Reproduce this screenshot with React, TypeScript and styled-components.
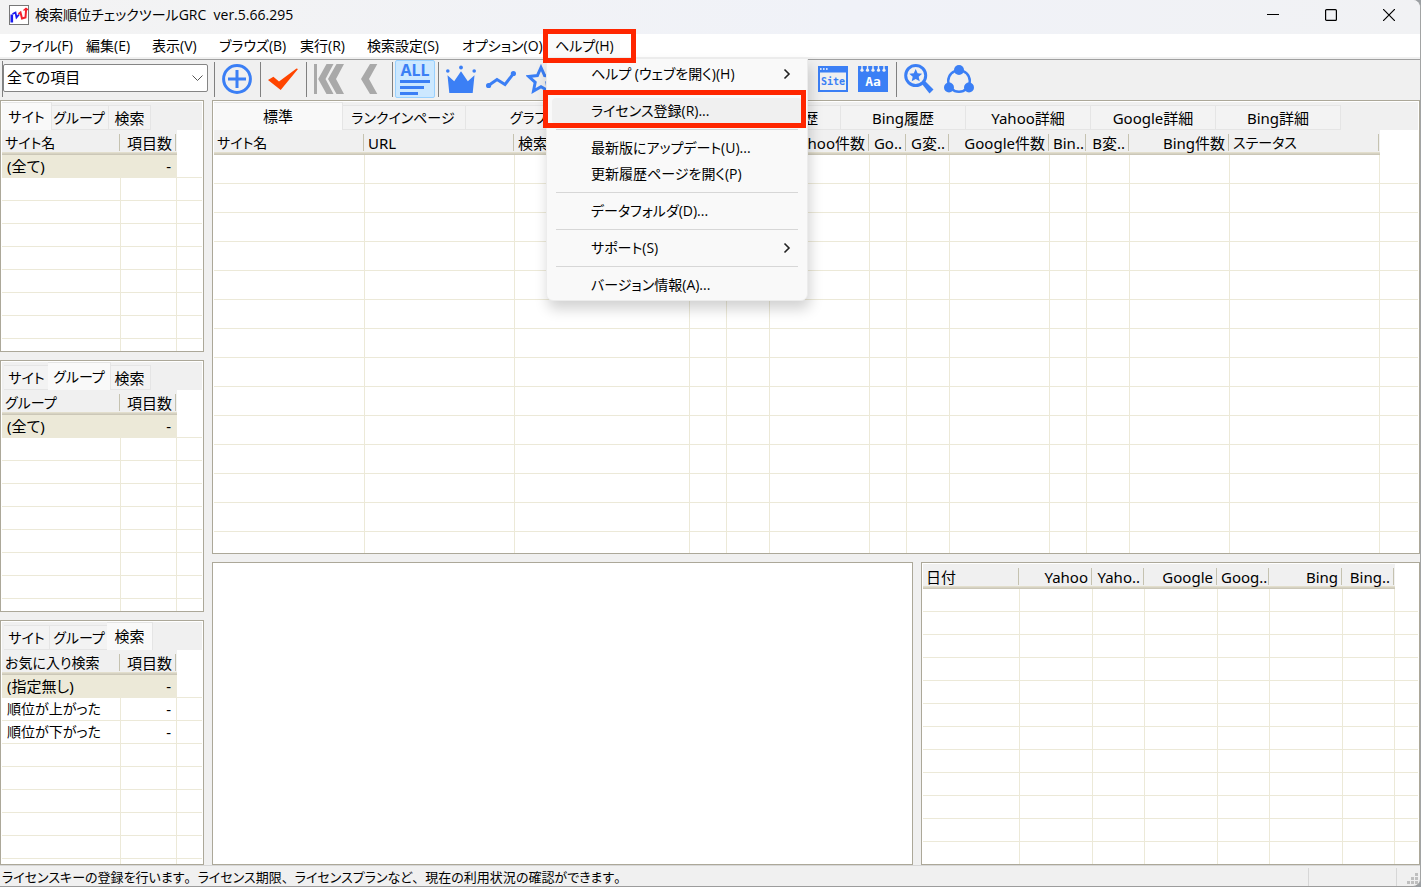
import React from "react";
import styled, { createGlobalStyle, css } from "styled-components";

const BLUE = "#3b7ff5";
const GREY = "#a9a9a9";
const PANEL_EDGE = "#aca899";
const GRID = "#ece9d8";

const GlobalStyle = createGlobalStyle`
  *, *::before, *::after { box-sizing: border-box; }
  body {
    margin: 0;
    background: #9b9fa3;
    color: #000;
    font-family: "Noto Sans", "Noto Sans CJK JP", sans-serif;
    font-size: 15px;
    font-feature-settings: "palt";
  }
  button, select {
    font: inherit;
    font-feature-settings: inherit;
    color: inherit;
  }
`;

const Window = styled.div`
  display: flex;
  flex-direction: column;
  height: 100vh;
  min-height: 600px;
  background: #f0f0f0;
  border-right: 1px solid #a2a4a4;
  border-bottom: 1px solid #9c9c9c;
  border-radius: 0 8px 8px 0;
  overflow: hidden;
`;

const TitleBar = styled.header`
  display: flex;
  align-items: flex-start;
  flex: none;
  height: 34px;
  padding: 0 2px 0 8px;
  background: linear-gradient(90deg, #f3f3f3, #f0f2f8 60%, #f1f2f4);

  > svg {
    margin-top: 5px;
  }
`;

const Title = styled.h1`
  flex: 1;
  margin: 5px 0 0 6px;
  font-family: "Open Sans", "Noto Sans CJK JP", sans-serif;
  font-size: 14px;
  font-weight: 400;
  line-height: 20px;
  white-space: pre;
`;

const CaptionButton = styled.button`
  display: grid;
  place-items: center;
  width: 58px;
  height: 34px;
  padding: 0 0 4px;
  border: 0;
  background: none;
`;

const MenuBar = styled.nav`
  display: flex;
  flex: none;
  height: 26px;
  background: #fff;
  border-bottom: 1px solid #a0a0a0;
  box-shadow: inset 0 -2px #f0f0f0;
`;

const MenuItem = styled.div<{ $width: number }>`
  position: relative;
  width: ${(p) => p.$width}px;
`;

const MenuButton = styled.button<{ $open?: boolean }>`
  width: 100%;
  height: 23px;
  padding: 0 0 0 9px;
  border: 0;
  background: ${(p) => (p.$open ? "#fafafa" : "none")};
  font-family: "Open Sans", "Noto Sans CJK JP", sans-serif;
  font-size: 14px;
  line-height: 23px;
  text-align: left;
  white-space: nowrap;
`;

const Highlight = styled.span<{ $inset: string }>`
  position: absolute;
  z-index: 6;
  inset: ${(p) => p.$inset};
  border: 5px solid #ff2600;
  pointer-events: none;
`;

const Dropdown = styled.div`
  position: absolute;
  z-index: 5;
  top: 24px;
  left: 0;
  width: 262px;
  padding: 2px 0;
  border: 1px solid #ececec;
  border-radius: 0 0 7px 7px;
  background: #f9f9f9;
  box-shadow: 2px 8px 14px rgba(0, 0, 0, 0.18);
`;

const DropdownItem = styled.button<{ $active?: boolean }>`
  position: relative;
  display: flex;
  align-items: center;
  justify-content: space-between;
  width: 250px;
  height: 26px;
  margin: 0 5px;
  padding: 0 11px 0 39px;
  border: 0;
  border-radius: 4px;
  background: ${(p) => (p.$active ? "#f0f0f0" : "none")};
  font-family: "Open Sans", "Noto Sans CJK JP", sans-serif;
  font-size: 14px;
  line-height: 26px;
  white-space: nowrap;
`;

const DropdownRule = styled.hr`
  height: 1px;
  margin: 5px 9px;
  border: 0;
  background: #d7d7d7;
`;

const Toolbar = styled.div`
  display: flex;
  align-items: center;
  flex: none;
  height: 40px;
  padding: 0 0 2px 2px;
`;

const Combo = styled.div`
  position: relative;
  flex: none;
  width: 206px;
  height: 36px;
  margin-right: 6px;
  padding-top: 3px;
  border-left: 1px solid #808080;

  svg {
    position: absolute;
    right: 5px;
    top: 13px;
    pointer-events: none;
  }
`;

const Select = styled.select`
  width: 205px;
  height: 28px;
  padding: 0 3px 3px;
  border: 1px solid #858585;
  border-radius: 2px;
  background: #fff;
  appearance: none;
`;

const Separator = styled.span<{ $first?: boolean }>`
  flex: none;
  width: 1px;
  height: 35px;
  margin: 0 2px 0 ${(p) => (p.$first ? 0 : 3)}px;
  background: #808080;
`;

const ToolButton = styled.button<{ $checked?: boolean }>`
  display: grid;
  place-items: center;
  flex: none;
  width: 40px;
  height: 38px;
  padding: 0;
  border: 1px solid ${(p) => (p.$checked ? "#99d1ff" : "transparent")};
  border-radius: 2px;
  background: ${(p) => (p.$checked ? "#cce8ff" : "none")};
`;

const Workspace = styled.main`
  display: grid;
  grid-template-columns: 204px minmax(0, 1fr);
  gap: 8px;
  flex: 1;
  min-height: 0;
`;

const Column = styled.div`
  display: flex;
  flex-direction: column;
  gap: 8px;
  min-width: 0;
  min-height: 0;
`;

const BottomRow = styled.div`
  display: grid;
  grid-template-columns: minmax(0, 701fr) minmax(0, 499fr);
  gap: 8px;
  flex: 303 1 0;
  min-height: 0;
`;

const Panel = styled.section<{ $grow?: number }>`
  display: flex;
  flex-direction: column;
  flex: ${(p) => p.$grow ?? 1} 1 0;
  min-width: 0;
  min-height: 0;
  padding: 1px;
  border: 1px solid ${PANEL_EDGE};
  background: #fff;
  overflow: hidden;
`;

const TabStrip = styled.div`
  display: flex;
  align-items: flex-end;
  flex: none;
  height: 28px;
  padding-left: 2px;
  background: #f0f0f0;
`;

const Tab = styled.button<{ $width: number; $active?: boolean; $small?: boolean }>`
  flex: none;
  width: ${(p) => p.$width}px;
  height: 25px;
  padding: 0;
  border: 1px solid #e5e5e5;
  border-left-width: 0;
  background: #f3f3f3;
  font-size: ${(p) => (p.$small ? 14 : 15)}px;
  line-height: 24px;
  white-space: nowrap;

  ${(p) =>
    p.$active &&
    css`
      position: relative;
      width: ${p.$width + 4}px;
      height: 28px;
      margin: 0 -2px;
      border-bottom: 0;
      background: #f9f9f9;
      line-height: 27px;
    `}
`;

const GridTable = styled.table`
  width: 100%;
  table-layout: fixed;
  border-spacing: 0;
`;

const HeadCell = styled.th<{ $right?: boolean; $small?: boolean }>`
  height: 25px;
  padding: 4px 1px 3px 0;
  border-bottom: 1px solid #cbc7b8;
  background: #f0f0f0;
  box-shadow: inset 0 -1px #d6d2c2, inset 0 -2px #e2decd;
  font-size: ${(p) => (p.$small ? 14 : 15)}px;
  font-weight: 400;
  text-align: ${(p) => (p.$right ? "right" : "left")};

  span {
    display: block;
    height: 17px;
    padding: 0 3px;
    border-right: 1px solid #c5c2b0;
    line-height: 18px;
    white-space: nowrap;
  }
`;

const BlankHead = styled.td`
  padding: 0;
`;

const Cell = styled.td<{
  $height: number;
  $right?: boolean;
  $selected?: boolean;
  $last?: boolean;
  $small?: boolean;
}>`
  height: ${(p) => p.$height}px;
  padding: 0 5px;
  border-bottom: 1px solid ${GRID};
  border-right: ${(p) => (p.$last ? 0 : 1)}px solid ${GRID};
  background: ${(p) => (p.$selected ? GRID : "#fff")};
  font-size: ${(p) => (p.$small ? 14 : 15)}px;
  line-height: 20px;
  text-align: ${(p) => (p.$right ? "right" : "left")};
  white-space: nowrap;
`;

const StatusBar = styled.footer`
  display: flex;
  align-items: stretch;
  flex: none;
  height: 21px;
  border-top: 1px solid #d7d7d7;
  font-size: 13px;
  line-height: 22px;
`;

const StatusText = styled.span`
  flex: 1;
  padding-left: 2px;
  white-space: nowrap;
`;

const Stop = styled.span`
  font-feature-settings: normal;
`;

const StatusCell = styled.span<{ $width: number }>`
  display: flex;
  align-items: flex-end;
  justify-content: flex-end;
  width: ${(p) => p.$width}px;
  margin-top: 2px;
  padding: 0 1px 1px 0;
  border-left: 1px solid #d7d7d7;
`;

/* Labels made mostly of kana are set one size down so they stay compact. */
const mostlyKana = (text = "") => {
  const kana = text.match(/[ぁ-ヶー]/g)?.length ?? 0;
  return kana > 1 && kana * 2 >= text.length - 1;
};

type Col = { label: string; width: number; right?: boolean };

function DataGrid({
  label,
  cols,
  rows = [],
  rowHeight,
  count,
  selectFirst,
}: {
  label: string;
  cols: Col[];
  rows?: string[][];
  rowHeight: number;
  count: number;
  selectFirst?: boolean;
}) {
  return (
    <GridTable aria-label={label}>
      <colgroup>
        {cols.map((c, i) => (
          <col key={i} width={c.width} />
        ))}
        <col />
      </colgroup>
      <thead>
        <tr>
          {cols.map((c, i) => (
            <HeadCell key={i} scope="col" $right={c.right} $small={mostlyKana(c.label)}>
              <span>{c.label}</span>
            </HeadCell>
          ))}
          <BlankHead />
        </tr>
      </thead>
      <tbody>
        {Array.from({ length: count }, (_, r) => (
          <tr key={r}>
            {cols.map((c, i) => (
              <Cell
                key={i}
                $height={rowHeight}
                $right={c.right}
                $selected={selectFirst && r === 0}
                $small={mostlyKana(rows[r]?.[i])}
              >
                {rows[r]?.[i]}
              </Cell>
            ))}
            <Cell $height={rowHeight} $last />
          </tr>
        ))}
      </tbody>
    </GridTable>
  );
}

const SIDE_TABS = [
  { label: "サイト", width: 46 },
  { label: "グループ", width: 59 },
  { label: "検索", width: 42 },
];

const MAIN_TABS = [
  "標準",
  "ランクインページ",
  "グラフ",
  "Yahoo履歴",
  "Google履歴",
  "Bing履歴",
  "Yahoo詳細",
  "Google詳細",
  "Bing詳細",
];

const MAIN_COLS: Col[] = [
  { label: "サイト名", width: 151 },
  { label: "URL", width: 150 },
  { label: "検索語", width: 175 },
  { label: "Ya..", width: 37, right: true },
  { label: "Y変..", width: 43, right: true },
  { label: "Yahoo件数", width: 100, right: true },
  { label: "Go..", width: 37, right: true },
  { label: "G変..", width: 43, right: true },
  { label: "Google件数", width: 100, right: true },
  { label: "Bin..", width: 37, right: true },
  { label: "B変..", width: 43, right: true },
  { label: "Bing件数", width: 100, right: true },
  { label: "ステータス", width: 150 },
];

const HISTORY_COLS: Col[] = [
  { label: "日付", width: 97 },
  { label: "Yahoo", width: 73, right: true },
  { label: "Yaho..", width: 52, right: true },
  { label: "Google", width: 73, right: true },
  { label: "Goog..", width: 52, right: true },
  { label: "Bing", width: 73, right: true },
  { label: "Bing..", width: 52, right: true },
];

const MENUS = [
  { label: "ファイル(F)", width: 77 },
  { label: "編集(E)", width: 66 },
  { label: "表示(V)", width: 67 },
  { label: "ブラウズ(B)", width: 81 },
  { label: "実行(R)", width: 67 },
  { label: "検索設定(S)", width: 95 },
  { label: "オプション(O)", width: 93 },
];

function SidePanel({
  active,
  heading,
  rows,
  grow,
}: {
  active: number;
  heading: string;
  rows: string[][];
  grow: number;
}) {
  return (
    <Panel $grow={grow}>
      <TabStrip role="tablist">
        {SIDE_TABS.map((t, i) => (
          <Tab
            key={t.label}
            role="tab"
            aria-selected={i === active}
            $width={t.width}
            $active={i === active}
            $small={mostlyKana(t.label)}
          >
            {t.label}
          </Tab>
        ))}
      </TabStrip>
      <DataGrid
        label={heading}
        cols={[
          { label: heading, width: 119 },
          { label: "項目数", width: 56, right: true },
        ]}
        rows={rows}
        rowHeight={23}
        count={24}
        selectFirst
      />
    </Panel>
  );
}

const Chevron = () => (
  <svg width="8" height="12" viewBox="0 0 8 12" fill="none" stroke="#222" strokeWidth="1.6">
    <path d="M1.5 1.5 6 6 1.5 10.5" />
  </svg>
);

const AppIcon = () => (
  <svg width="21" height="20" viewBox="0 0 21 20">
    <rect x="1.5" y=".5" width="19" height="19" fill="#fff" stroke="#777" />
    <path d="M3.8 17.5V9.5" fill="none" stroke="#1a1af0" strokeWidth="2.6" />
    <path d="M4.5 9 7.500 7.500 8.500 12.500 11 9.500" fill="none" stroke="#1a1af0" strokeWidth="1.8" />
    <path d="M10.500 9 12.500 7.500 14 13.500 17.500 12.500 18.200 3" fill="none" stroke="#f5202c" strokeWidth="2" />
    <path d="M15.500 5.500 18 3.500 20 5" fill="none" stroke="#f5202c" strokeWidth="1.4" />
  </svg>
);

const ToolIcon = ({ children, color = BLUE }: { children: React.ReactNode; color?: string }) => (
  <svg width="30" height="30" viewBox="0 0 30 30" fill={color} aria-hidden="true">
    {children}
  </svg>
);

const AddIcon = () => (
  <ToolIcon>
    <g fill="none" stroke={BLUE} strokeWidth="3">
      <circle cx="15" cy="15" r="13.4" />
      <path d="M6 15h18M15 6v18" />
    </g>
  </ToolIcon>
);

const CheckIcon = () => (
  <ToolIcon color="#ff4500">
    <path d="M0 16l5.400-3.300L11 17.400 28.500 4.500 30 5 12.700 26z" />
  </ToolIcon>
);

const FirstIcon = () => (
  <ToolIcon color={GREY}>
    <path d="M0 0h3v30H0zM12.500 0h7l-8 15 8 15h-7L4.200 15zM22.500 0H30l-8 15 8 15h-7.500L14 15z" />
  </ToolIcon>
);

const PrevIcon = () => (
  <ToolIcon color={GREY}>
    <path d="M16 0h7.300l-8.300 15 8.300 15H16L7 15z" />
  </ToolIcon>
);

const AllIcon = () => (
  <svg width="34" height="36" viewBox="-2 -4 34 36" fill={BLUE} aria-hidden="true">
    <text x="15" y="11" textAnchor="middle" fontSize="16" fontWeight="700" fontFamily="Noto Sans, sans-serif">
      ALL
    </text>
    <path d="M0 15h30v3H0zM0 21h24v3H0zM0 27h18v3H0z" />
  </svg>
);

const CrownIcon = () => (
  <ToolIcon>
    <circle cx="1.800" cy="7" r="1.800" />
    <circle cx="15" cy="3.500" r="1.900" />
    <circle cx="28.200" cy="7" r="1.800" />
    <path d="M1.500 11.300 8.200 17.300 15 7.300l6.800 10 6.700-6L26.700 29H3.300z" />
  </ToolIcon>
);

const TrendIcon = () => (
  <ToolIcon>
    <path d="M2.500 21.500 11 15.500l8 5L27.500 9.500" fill="none" stroke={BLUE} strokeWidth="3" />
    <circle cx="2.600" cy="21.500" r="2.600" />
    <circle cx="27.400" cy="9.500" r="2.600" />
  </ToolIcon>
);

const StarIcon = () => (
  <ToolIcon>
    <path
      d="M15 3.500l3.600 8 8.600 1-6.400 5.900 1.700 8.600L15 22.700 7.500 27l1.700-8.600-6.400-5.900 8.600-1z"
      fill="none"
      stroke={BLUE}
      strokeWidth="3"
    />
  </ToolIcon>
);

const SquareIcon = () => (
  <ToolIcon>
    <path d="M3 3h24v24H3zM6 9v15h18V9z" fillRule="evenodd" />
  </ToolIcon>
);

const SiteIcon = () => (
  <ToolIcon>
    <path d="M0 2h30v26H0zM2 8.500V26h26V8.500z" fillRule="evenodd" />
    <path d="M2 4.200h1.600v1.600H2zM5 4.200h1.600v1.600H5zM8 4.200h1.600v1.600H8z" fill="#fff" />
    <text x="15" y="21" textAnchor="middle" fontSize="10" fontWeight="700" fontFamily="DejaVu Sans Mono, monospace">
      Site
    </text>
  </ToolIcon>
);

const WordIcon = () => (
  <ToolIcon>
    <path d="M0 2h30v26H0z" />
    <g fill="#f0f0f0">
      {[4, 9.5, 15, 20.5, 26].map((x) => (
        <g key={x}>
          <path d={`M${x - 0.7} 2h1.4v4h-1.4z`} />
          <circle cx={x} cy="6.200" r="1.600" />
        </g>
      ))}
    </g>
    <text x="15" y="22" textAnchor="middle" fontSize="13" fontWeight="700" fill="#fff" fontFamily="DejaVu Sans Mono, monospace">
      Aa
    </text>
  </ToolIcon>
);

const SearchIcon = () => (
  <ToolIcon>
    <circle cx="11.700" cy="11.500" r="10" fill="none" stroke={BLUE} strokeWidth="3" />
    <path d="M18 20l3-3 8.500 8.500-4 4z" />
    <path d="M11.700 5l1.900 4.200 4.500.5-3.400 3 1 4.500-4-2.300-4 2.300 1-4.500-3.400-3 4.500-.5z" />
  </ToolIcon>
);

const ShareIcon = () => (
  <ToolIcon>
    <circle cx="15" cy="17" r="10.800" fill="none" stroke={BLUE} strokeWidth="2.400" />
    <circle cx="15" cy="6" r="5" />
    <circle cx="5" cy="23.500" r="5" />
    <circle cx="25" cy="23.500" r="5" />
  </ToolIcon>
);

const GripIcon = () => (
  <svg width="12" height="12" fill="#bfbfbf" aria-hidden="true">
    <path d="M8 0h3v3H8zM4 4h3v3H4zM8 4h3v3H8zM0 8h3v3H0zM4 8h3v3H4zM8 8h3v3H8z" />
  </svg>
);

type Tool = { name: string; icon: () => React.ReactElement; checked?: boolean };

const TOOL_GROUPS: Tool[][] = [
  [{ name: "追加", icon: AddIcon }],
  [{ name: "チェック", icon: CheckIcon }],
  [
    { name: "最初へ", icon: FirstIcon },
    { name: "前へ", icon: PrevIcon },
  ],
  [{ name: "全て表示", icon: AllIcon, checked: true }],
  [
    { name: "上位", icon: CrownIcon },
    { name: "変化", icon: TrendIcon },
    { name: "お気に入り", icon: StarIcon },
    { name: "メモ", icon: SquareIcon },
    { name: "一覧", icon: SquareIcon },
  ],
  [
    { name: "グラフ", icon: SquareIcon },
    { name: "履歴", icon: SquareIcon },
  ],
  [
    { name: "詳細", icon: SquareIcon },
    { name: "ページ", icon: SquareIcon },
    { name: "サイト", icon: SiteIcon },
    { name: "検索語", icon: WordIcon },
  ],
  [
    { name: "検索", icon: SearchIcon },
    { name: "共有", icon: ShareIcon },
  ],
];

export default function App() {
  return (
    <>
      <GlobalStyle />
      <Window>
        <TitleBar>
          <AppIcon />
          <Title>検索順位チェックツールGRC  ver.5.66.295</Title>
          <CaptionButton aria-label="最小化">
            <svg width="12" height="12" stroke="#000">
              <path d="M0 5.500h12" />
            </svg>
          </CaptionButton>
          <CaptionButton aria-label="最大化">
            <svg width="12" height="12" fill="none" stroke="#000" strokeWidth="1.200">
              <rect x=".6" y=".6" width="10.800" height="10.800" rx="1" />
            </svg>
          </CaptionButton>
          <CaptionButton aria-label="閉じる">
            <svg width="12" height="12" stroke="#000" strokeWidth="1.200">
              <path d="M0 0l12 12M12 0 0 12" />
            </svg>
          </CaptionButton>
        </TitleBar>

        <MenuBar>
          {MENUS.map((m) => (
            <MenuItem key={m.label} $width={m.width}>
              <MenuButton>{m.label}</MenuButton>
            </MenuItem>
          ))}
          <MenuItem $width={74}>
            <MenuButton $open aria-expanded="true">
              ヘルプ(H)
            </MenuButton>
            <Dropdown role="menu">
              <DropdownItem role="menuitem">
                ヘルプ (ウェブを開く)(H)
                <Chevron />
              </DropdownItem>
              <DropdownRule />
              <DropdownItem role="menuitem" $active>
                ライセンス登録(R)...
                <Highlight $inset="-8px -4px -4px -9px" />
              </DropdownItem>
              <DropdownRule />
              <DropdownItem role="menuitem">最新版にアップデート(U)...</DropdownItem>
              <DropdownItem role="menuitem">更新履歴ページを開く(P)</DropdownItem>
              <DropdownRule />
              <DropdownItem role="menuitem">データフォルダ(D)...</DropdownItem>
              <DropdownRule />
              <DropdownItem role="menuitem">
                サポート(S)
                <Chevron />
              </DropdownItem>
              <DropdownRule />
              <DropdownItem role="menuitem">バージョン情報(A)...</DropdownItem>
            </Dropdown>
            <Highlight $inset="-5px -16px -4px -3px" />
          </MenuItem>
        </MenuBar>

        <Toolbar>
          <Combo>
            <Select aria-label="表示項目">
              <option>全ての項目</option>
            </Select>
            <svg width="11" height="8" fill="none" stroke="#555">
              <path d="M.5 1.500l5 5 5-5" />
            </svg>
          </Combo>
          {TOOL_GROUPS.map((group, g) => (
            <React.Fragment key={g}>
              <Separator $first={g === 0} />
              {group.map(({ name, icon: Icon, checked }) => (
                <ToolButton key={name} aria-label={name} $checked={checked}>
                  <Icon />
                </ToolButton>
              ))}
            </React.Fragment>
          ))}
        </Toolbar>

        <Workspace>
          <Column>
            <SidePanel active={0} heading="サイト名" rows={[["(全て)", "-"]]} grow={252} />
            <SidePanel active={1} heading="グループ" rows={[["(全て)", "-"]]} grow={252} />
            <SidePanel
              active={2}
              heading="お気に入り検索"
              rows={[
                ["(指定無し)", "-"],
                ["順位が上がった", "-"],
                ["順位が下がった", "-"],
              ]}
              grow={245}
            />
          </Column>
          <Column>
            <Panel $grow={450}>
              <TabStrip role="tablist">
                {MAIN_TABS.map((t, i) => (
                  <Tab
                    key={t}
                    role="tab"
                    aria-selected={i === 0}
                    $width={125}
                    $active={i === 0}
                    $small={mostlyKana(t)}
                  >
                    {t}
                  </Tab>
                ))}
              </TabStrip>
              <DataGrid label="検索順位" cols={MAIN_COLS} rowHeight={29} count={30} />
            </Panel>
            <BottomRow>
              <Panel aria-label="グラフ" />
              <Panel>
                <DataGrid label="順位履歴" cols={HISTORY_COLS} rowHeight={23} count={30} />
              </Panel>
            </BottomRow>
          </Column>
        </Workspace>

        <StatusBar>
          <StatusText>
            ライセンスキーの登録を行います<Stop>。</Stop>ライセンス期限<Stop>、</Stop>ライセンスプランなど<Stop>、</Stop>
            現在の利用状況の確認ができます<Stop>。</Stop>
          </StatusText>
          <StatusCell $width={88} />
          <StatusCell $width={24}>
            <GripIcon />
          </StatusCell>
        </StatusBar>
      </Window>
    </>
  );
}
